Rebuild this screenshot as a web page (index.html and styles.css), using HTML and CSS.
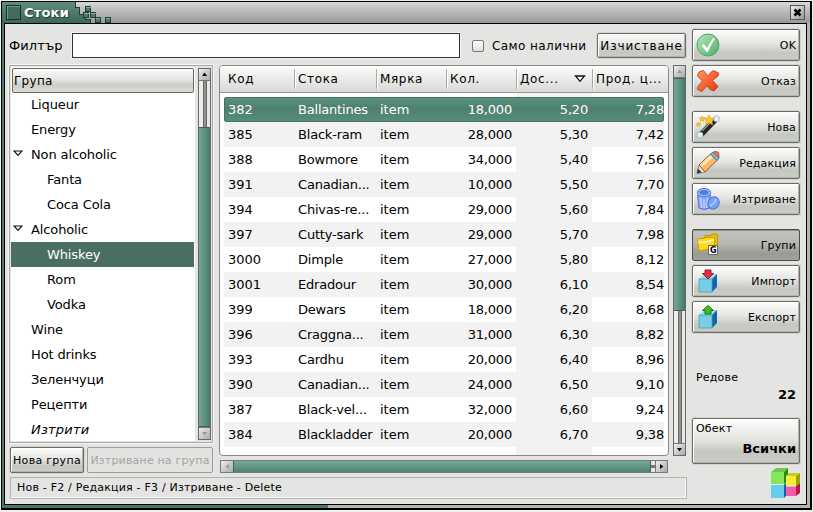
FILE: index.html
```html
<!DOCTYPE html>
<html lang="bg">
<head>
<meta charset="utf-8">
<title>Стоки</title>
<link rel="stylesheet" href="styles.css">
</head>
<body>
<div class="window">
  <header class="titlebar">
    <svg class="title-art" width="120" height="21" viewBox="0 0 120 21" shape-rendering="crispEdges">
      <defs><linearGradient id="tg" x1="0" y1="0" x2="0" y2="1"><stop offset="0" stop-color="#608c7e"/><stop offset="1" stop-color="#3e6659"/></linearGradient></defs>
      <path d="M0 0H73V5H77V12H83V17H88V21H0Z" fill="url(#tg)"/>
      <path d="M73 0v5h4v7h6v5h5v4" fill="none" stroke="#1e3c33"/>
      <g fill="#4d786b" stroke="#203e35"><rect x="83.500" y="4.500" width="5" height="5"/><rect x="81.500" y="10.500" width="5" height="5"/><rect x="88.500" y="10.500" width="5" height="5"/><rect x="93.500" y="15.500" width="5" height="5"/><rect x="103.500" y="15.500" width="5" height="5"/></g>
      <path d="M84 5h5M82 11h5M89 11h5M94 16h4M104 16h4" stroke="#87ada0"/>
      <rect x="4.500" y="3.500" width="14" height="14" fill="#416c5f" stroke="#183229"/><path d="M5 17V4H18" fill="none" stroke="#739a8e"/>
    </svg>
    <h1>Стоки</h1>
    <button class="close"><svg width="9" height="9" viewBox="0 0 9 9"><path d="M1.500 1.500l6 6M7.500 1.500l-6 6" stroke="#000" stroke-width="2.600"/></svg></button>
  </header>
  <div class="client">
    <main class="main">
      <div class="filter">
        <label class="filter-label">Филтър</label>
        <input class="filter-input" type="text">
        <span class="check"></span><span class="check-label">Само налични</span>
        <button class="btn clear">Изчистване</button>
      </div>
      <div class="panes">
        <section class="left">
          <div class="treebox">
            <div class="tree">
              <div class="tree-head">Група</div>
              <div class="node">Liqueur</div>
              <div class="node">Energy</div>
              <div class="node open"><svg class="tri" width="10" height="7" viewBox="0 0 10 7"><path d="M1 1H9L5 5.300Z" fill="#fff" stroke="#111" stroke-width="1.200"/></svg>Non alcoholic</div>
              <div class="node child">Fanta</div>
              <div class="node child">Coca Cola</div>
              <div class="node open"><svg class="tri" width="10" height="7" viewBox="0 0 10 7"><path d="M1 1H9L5 5.300Z" fill="#fff" stroke="#111" stroke-width="1.200"/></svg>Alcoholic</div>
              <div class="node child chosen">Whiskey</div>
              <div class="node child">Rom</div>
              <div class="node child">Vodka</div>
              <div class="node">Wine</div>
              <div class="node">Hot drinks</div>
              <div class="node">Зеленчуци</div>
              <div class="node">Рецепти</div>
              <div class="node deleted">Изтрити</div>
            </div>
            <div class="vscroll tree-scroll">
              <span class="arrow"><svg width="7" height="7"><path d="M1 5L3.500 1.500L6 5Z"/></svg></span>
              <span class="trough t-before"></span><span class="thumb"></span>
              <span class="arrow off"><svg width="7" height="7"><path d="M1 2L3.500 5.500L6 2Z"/></svg></span>
            </div>
          </div>
          <div class="group-actions"><button class="btn new-group">Нова група</button><button class="btn del-group">Изтриване на група</button></div>
        </section>
        <section class="right">
          <div class="grid">
            <div class="grid-head"><span>Код</span><span>Стока</span><span>Мярка</span><span>Кол.</span><span class="sorted">Дос...<svg width="12" height="8" viewBox="0 0 12 8"><path d="M1.500 1H10.500L6 6.300Z" fill="#fff" stroke="#111" stroke-width="1.300"/></svg></span><span>Прод. ц...</span></div>
            <div class="grid-body">
              <div class="row picked"><span>382</span><span>Ballantines</span><span>item</span><span>18,000</span><span>5,20</span><span>7,28</span></div>
              <div class="row"><span>385</span><span>Black-ram</span><span>item</span><span>28,000</span><span>5,30</span><span>7,42</span></div>
              <div class="row"><span>388</span><span>Bowmore</span><span>item</span><span>34,000</span><span>5,40</span><span>7,56</span></div>
              <div class="row"><span>391</span><span>Canadian...</span><span>item</span><span>10,000</span><span>5,50</span><span>7,70</span></div>
              <div class="row"><span>394</span><span>Chivas-re...</span><span>item</span><span>29,000</span><span>5,60</span><span>7,84</span></div>
              <div class="row"><span>397</span><span>Cutty-sark</span><span>item</span><span>29,000</span><span>5,70</span><span>7,98</span></div>
              <div class="row"><span>3000</span><span>Dimple</span><span>item</span><span>27,000</span><span>5,80</span><span>8,12</span></div>
              <div class="row"><span>3001</span><span>Edradour</span><span>item</span><span>30,000</span><span>6,10</span><span>8,54</span></div>
              <div class="row"><span>399</span><span>Dewars</span><span>item</span><span>18,000</span><span>6,20</span><span>8,68</span></div>
              <div class="row"><span>396</span><span>Craggna...</span><span>item</span><span>31,000</span><span>6,30</span><span>8,82</span></div>
              <div class="row"><span>393</span><span>Cardhu</span><span>item</span><span>20,000</span><span>6,40</span><span>8,96</span></div>
              <div class="row"><span>390</span><span>Canadian...</span><span>item</span><span>24,000</span><span>6,50</span><span>9,10</span></div>
              <div class="row"><span>387</span><span>Black-vel...</span><span>item</span><span>32,000</span><span>6,60</span><span>9,24</span></div>
              <div class="row"><span>384</span><span>Blackladder</span><span>item</span><span>20,000</span><span>6,70</span><span>9,38</span></div>
            </div>
          </div>
          <div class="vscroll grid-scroll">
            <span class="arrow off"><svg width="7" height="7"><path d="M1 5L3.500 1.500L6 5Z"/></svg></span>
            <span class="thumb"></span><span class="trough"></span>
            <span class="arrow"><svg width="7" height="7"><path d="M1 2L3.500 5.500L6 2Z"/></svg></span>
          </div>
          <div class="hscroll">
            <span class="arrow off"><svg width="7" height="7"><path d="M5 1L1.500 3.500L5 6Z"/></svg></span>
            <span class="hthumb"></span><span class="htrough"></span>
            <span class="arrow next"><svg width="7" height="7"><path d="M2 1L5.500 3.500L2 6Z"/></svg></span>
          </div>
        </section>
      </div>
      <footer class="status">Нов - F2 / Редакция - F3 / Изтриване - Delete</footer>
    </main>
    <aside class="side">
      <button class="btn act"><svg width="24" height="24" viewBox="0 0 24 24"><defs><linearGradient id="ok" x1="0" y1="0" x2="1" y2="1"><stop offset="0" stop-color="#bce8c0"/><stop offset="1" stop-color="#4dac68"/></linearGradient></defs><circle cx="12" cy="12" r="11" fill="url(#ok)" stroke="#4ba36b"/><path d="M5.500 12.500L8 11L11 15Q14 8.500 18 4.500L18.500 6.500Q14.500 12 11.800 19H10.500Z" fill="#fff"/></svg><span>OK</span></button>
      <button class="btn act"><svg width="24" height="24" viewBox="0 0 24 24"><defs><linearGradient id="no" x1="0" y1="0" x2="1" y2="1"><stop offset="0" stop-color="#ff9a62"/><stop offset=".6" stop-color="#f85a29"/><stop offset="1" stop-color="#e03614"/></linearGradient></defs><path d="M3 3L7.500 1.500L11.500 7L17 1.500L22.500 4L22 7L16.500 11.500L22 17.500L18 22L14 20.500L11 16.500L6 22.500L1.500 20.500L2 17.500L6.500 12L1.500 7Z" fill="url(#no)" stroke="#c4492a" stroke-linejoin="round"/></svg><span>Отказ</span></button>
      <button class="btn act gap"><svg width="24" height="24" viewBox="0 0 24 24"><path d="M4.500 20L19.500 4.500" stroke="#242426" stroke-width="5.500"/><path d="M6 16L17 5" stroke="#a2a4a8" stroke-width="1.300"/><circle cx="4" cy="20" r="3" fill="#e3f0f4" stroke="#9bb7c4" stroke-width=".8"/><circle cx="20.500" cy="3.800" r="3" fill="#e3f0f4" stroke="#9bb7c4" stroke-width=".8"/><path d="M13 0l1.500 3 4 .3-2.700 2.500.8 4-3.600-2-3.500 2 .7-4L7.500 3.300l4-.3ZM6 1l.9 1.800 2 .2-1.500 1.400.4 2L6 5.500l-1.700.9.4-2L3.200 3l2-.2ZM2.500 7l.8 1.500 1.700.2-1.300 1.200.3 1.700-1.500-.9-1.500.9.3-1.700L0 8.700l1.700-.2Z" fill="#ffc52b" stroke="#dda118" stroke-width=".6"/></svg><span>Нова</span></button>
      <button class="btn act"><svg width="24" height="24" viewBox="0 0 24 24"><path d="M1 22.500L3 14L9.500 21Z" fill="#ffe6c5" stroke="#777" stroke-width=".8"/><path d="M3 14L14.500 3L21 9.500L9 21Z" fill="#ffb666" stroke="#94582c"/><path d="M5 15L16 5" stroke="#ffe5bd" stroke-width="3.500"/><path d="M14.500 3L17 1.200L23 7L21 9.500Z" fill="#78c0ea" stroke="#3c75a0"/><path d="M17 1.200Q21-.5 22.700 2L23 7Z" fill="#f07551" stroke="#a85b46"/><path d="M1 22.500L2 17.500L5.800 21.300Z" fill="#223263"/></svg><span>Редакция</span></button>
      <button class="btn act"><svg width="24" height="24" viewBox="0 0 24 24"><path d="M1.500 8H14.500L13.500 21Q8 24 3 21Z" fill="#87a9f5" stroke="#4c73d8"/><path d="M4.500 11l1 10M8 12v9M11.500 11l-1 10" stroke="#c8dafc" stroke-width="1.200"/><ellipse cx="8" cy="5.500" rx="6.700" ry="4" fill="#a9c6ff" stroke="#466fd4"/><ellipse cx="8" cy="5.500" rx="4.700" ry="2.400" fill="#4e7be2"/><ellipse cx="17.500" cy="16" rx="5.500" ry="6.300" transform="rotate(28 17.500 16)" fill="#78a3f8" stroke="#4a75dc"/><path d="M14 19Q18 17 20.500 12" fill="none" stroke="#b4cdfc" stroke-width="1.500"/></svg><span>Изтриване</span></button>
      <button class="btn act gap pressed"><svg width="24" height="24" viewBox="0 0 24 24"><path d="M8 5L9.500 2.500H15L16 1H21.500V14.500H8Z" fill="#eab90c" stroke="#c49600"/><path d="M1.500 7.500L2 5.500H8L9.500 4.500H18.500V15L3 18Z" fill="#ffd81c" stroke="#c9a000"/><path d="M2.500 9Q10 10 18 6.500" stroke="#fff296" fill="none" stroke-width="2"/><path d="M12.500 12.500h9v9h-9z" fill="#fff" stroke="#666"/><text x="14" y="20.200" class="folder-letter">G</text></svg><span>Групи</span></button>
      <button class="btn act"><svg width="24" height="24" viewBox="0 0 24 24"><path d="M3 10L9 5H21L16 10Z" fill="#91dcf2"/><path d="M16 10L21 5V18L16 23Z" fill="#1266a9"/><path d="M3 10H16V23H3Z" fill="#78cee4" stroke="#479fbd" stroke-width=".8"/><path d="M9 1H15V4.500H17.500L12 10L6.500 4.500H9Z" fill="#e62e40" stroke="#941c2b"/></svg><span>Импорт</span></button>
      <button class="btn act"><svg width="24" height="24" viewBox="0 0 24 24"><path d="M3 10L9 5H21L16 10Z" fill="#91dcf2"/><path d="M16 10L21 5V18L16 23Z" fill="#1266a9"/><path d="M3 10H16V23H3Z" fill="#78cee4" stroke="#479fbd" stroke-width=".8"/><path d="M9 9H15V5.500H17.500L12 .5L6.500 5.500H9Z" fill="#40bd1c" stroke="#24740f"/></svg><span>Експорт</span></button>
      <div class="count"><span>Редове</span><strong>22</strong></div>
      <button class="btn object"><span>Обект</span><strong>Всички</strong></button>
      <svg class="logo" width="30" height="31" viewBox="0 0 30 31"><path d="M1 4L6 0H18L14 4Z" fill="#6fca4b"/><path d="M14 4L18 0V13L14 16Z" fill="#238c17"/><path d="M14 17L18 13V26L14 30Z" fill="#1262a5"/><path d="M1 4H14V16H1Z" fill="#86e45d"/><path d="M1 17H14V30H1Z" fill="#66cdec"/><path d="M16 8L19 5H30L26 8Z" fill="#cacb1b"/><path d="M26 8L30 5V15L26 18Z" fill="#9ba405"/><path d="M16 8H26V18H16Z" fill="#f3ed3a"/><path d="M26 18L30 15V25L26 28Z" fill="#b91a48"/><path d="M16 18H26V28H16Z" fill="#f05bac"/><path d="M1 16.500H14M16 18H26" stroke="#eefce2"/></svg>
    </aside>
  </div>
</div>
</body>
</html>
```
FILE: styles.css
```css
* { box-sizing: border-box; }
body { margin: 0; width: 813px; height: 512px; overflow: hidden; background: #eef1ec; font: 13px "DejaVu Sans", sans-serif; color: #000; }
button { font: inherit; color: inherit; padding: 0; margin: 0; }
svg { flex: none; }
.window { width: 811px; height: 509px; margin: 1px 0 0 1px; border: solid #000; border-width: 1px 2px 2px 1px; background: linear-gradient(90deg, #4b7668 0 326px, #b5b5b1 326px); display: flex; flex-direction: column; }
.titlebar { height: 21px; flex: none; display: flex; align-items: center; background: linear-gradient(#d8d8d8, #c3c3c3 30%, #999); position: relative; }
.title-art { position: absolute; left: 0; top: 0; }
h1 { position: relative; margin: 0 0 0 22px; font-size: 13px; line-height: 20px; color: #fff; letter-spacing: .2px; text-shadow: 1px 1px 1px #183b30; }
.close { position: relative; margin-left: auto; margin-right: 5px; width: 15px; height: 15px; border: 1px solid #555; background: linear-gradient(135deg, #eee, #999); display: flex; align-items: center; justify-content: center; }
.client { flex: none; height: 482px; margin: 0 3px 0 2px; border: 1px solid #000; background: #e4e4e2; display: flex; }
.main { width: 683px; padding: 9px 0 0 4px; flex: none; }
.filter { display: flex; align-items: center; height: 25px; }
.filter-label { width: 63px; letter-spacing: .1px; }
.filter-input { width: 388px; height: 25px; border: 1px solid #333; box-shadow: 0 0 0 1px #f1f1ef; background: #fff; padding: 0; }
.check { width: 12px; height: 12px; margin-left: 12px; border: 1px solid #777; border-radius: 2px; background: linear-gradient(#fff, #ddd); }
.check-label { width: 105px; margin-left: 8px; font-size: 12px; letter-spacing: .42px; white-space: nowrap; }
.btn { border: 1px solid #6c6d66; border-radius: 2px; box-shadow: inset 1px 1px #fff, inset -1px -1px #b2b3ae, 0 0 0 1px #d3d3d0; background: linear-gradient(#fdfdfd, #e5e6e2 45%, #c5c8c1 75%, #cacdc6); white-space: nowrap; }
.clear { width: 89px; height: 25px; font-size: 12px; letter-spacing: .9px; }
.panes { display: flex; margin-top: 7px; height: 409px; }
.left { width: 204px; }
.treebox { height: 378px; border: 1px solid #aaa; padding: 1px; box-shadow: 0 0 0 1px #f3f3f1; display: flex; background: #e4e4e2; }
.tree { width: 184px; background: #fff; }
.tree-head { height: 25px; margin: 1px 1px 0; border: 1px solid #676860; border-radius: 2px; background: linear-gradient(#fafafa, #e5e5e3 45%, #cccfc8 70%, #dadcd7); padding-left: 1px; line-height: 24px; font-size: 12px; letter-spacing: .3px; }
.tree-head + .node { margin-top: -1px; }
.node { height: 25px; line-height: 25px; padding-left: 20px; margin-right: 1px; letter-spacing: -.12px; }
.open { padding-left: 2px; display: flex; align-items: center; }
.tri { margin-right: 8px; margin-top: -3px; }
.child { padding-left: 36px; }
.chosen { background: #4b6e62; color: #fff; }
.deleted { font-style: italic; height: 24px; letter-spacing: .2px; }
.vscroll { width: 13px; display: flex; flex-direction: column; background: #eee; border: 1px solid #696969; }
.tree-scroll { margin: 1px 0 1px 3px; }
.arrow { width: 11px; height: 12px; flex: none; background: linear-gradient(135deg, #eee, #aaa); display: flex; align-items: center; justify-content: center; border-bottom: 1px solid #777; }
.arrow svg { fill: #000; }
.off svg { fill: #999; }
.trough { flex: 1; background: linear-gradient(90deg, #ededeb 0 4px, #686864 4px 5px, #92928e 5px 7px, #686864 7px 8px, #e8e8e6 8px); }
.t-before { flex: 0 0 46px; }
.tree-scroll .thumb { flex: 1; }
.grid-scroll .thumb { flex: 0 0 233px; }
.thumb { background: linear-gradient(90deg, #71a794, #568b78 70%, #477766); border: 1px solid #3e6557; border-width: 1px 0; }
.vscroll .arrow:last-child { border-top: 1px solid #777; border-bottom: 0; }
.group-actions { display: flex; gap: 3px; padding: 4px 0 0 1px; }
.group-actions .btn { height: 26px; font-size: 11px; letter-spacing: .3px; }
.new-group { width: 74px; }
.del-group { width: 126px; }
.group-actions .del-group { color: #a4a4a2; border-color: #9c9c99; background: #e2e2e0; box-shadow: none; letter-spacing: .18px; }
.right { margin-left: 6px; display: grid; grid-template-columns: 450px 13px; grid-template-rows: 391px 13px; column-gap: 4px; row-gap: 4px; }
.grid { border: 1px solid #888; border-radius: 4px; background: #fff; overflow: hidden; }
.grid-head { height: 27px; display: grid; grid-template-columns: 74px 82px 70px 70px 76px 76px; background: linear-gradient(#fcfcfb, #d9dad7); border-bottom: 1px solid #999; align-items: center; font-size: 12px; letter-spacing: .65px; white-space: nowrap; }
.grid-head span { height: 20px; line-height: 20px; padding-left: 3px; border-left: 1px solid #aaa; box-shadow: inset 1px 0 #fff; }
.grid-head span:first-child { border: 0; box-shadow: none; padding-left: 8px; }
.grid-head .sorted { display: flex; justify-content: space-between; align-items: center; padding-right: 6px; }
.grid-body { height: 362px; padding: 4px 4px 0; background: linear-gradient(90deg, transparent 296px, #f2f2f2 296px 372px, transparent 372px); }
.row { display: grid; grid-template-columns: 70px 82px 70px 70px 76px 72px; height: 25px; line-height: 25px; letter-spacing: -.2px; }
.row:nth-child(even) { background: #f2f2f2; }
.row span { padding-left: 4px; white-space: nowrap; }
.row span:first-child, .row span:nth-child(3) { letter-spacing: 0; }
.row span:nth-child(n+4) { text-align: right; padding: 0 4px 0 0; }
.row span:last-child { padding-right: 0; }
.picked { color: #fff; border-radius: 3px; background: linear-gradient(#5b9380, #4f7f6e 45%, #588e7b); box-shadow: inset 0 0 0 1px #477362; }
.hscroll { display: flex; height: 13px; width: 448px; margin-left: 1px; border: 1px solid #777; background: #ddd; }
.hscroll .arrow { width: 12px; height: 11px; border: 0; }
.hscroll .next { border-left: 1px solid #777; }
.hthumb { width: 418px; border: 1px solid #3d6758; border-width: 0 1px; background: linear-gradient(#75aa98, #4d8370); }
.htrough { flex: 1; background: linear-gradient(#e6e6e4 0 4px, #777 4px 7px, #e6e6e4 7px); }
.status { height: 22px; width: 677px; margin: 3px 0 0 1px; border: 1px solid #b3b3b0; box-shadow: inset -1px -1px #f7f7f5; padding-left: 6px; line-height: 19px; font-size: 11px; letter-spacing: .2px; }
.side { width: 108px; margin-left: 4px; padding-top: 5px; display: flex; flex-direction: column; }
.act { height: 32px; flex: none; margin-bottom: 4px; padding: 0 3px; display: flex; align-items: center; justify-content: space-between; font-size: 11px; letter-spacing: .15px; }
.gap { margin-top: 10px; }
.pressed { background: linear-gradient(#c3c4bd, #b6b7b0 45%, #999b92 80%, #a2a49b); border-color: #4e4f4a; box-shadow: inset 0 1px #8c8d87; }
.folder-letter { font: bold 8px "DejaVu Sans", sans-serif; letter-spacing: 0; }
.count { display: flex; flex-direction: column; height: 81px; padding: 33px 4px 0; font-size: 11px; letter-spacing: .2px; line-height: 15px; }
.count strong { align-self: flex-end; font-size: 13px; letter-spacing: 0; margin-top: 2px; }
.object { height: 46px; flex: none; display: flex; flex-direction: column; justify-content: space-between; padding: 3px 3px 7px; text-align: left; font-size: 11px; letter-spacing: .2px; line-height: 14px; }
.object strong { align-self: flex-end; font-size: 13px; letter-spacing: 0; }
.logo { align-self: flex-end; margin-top: 4px; }
```
